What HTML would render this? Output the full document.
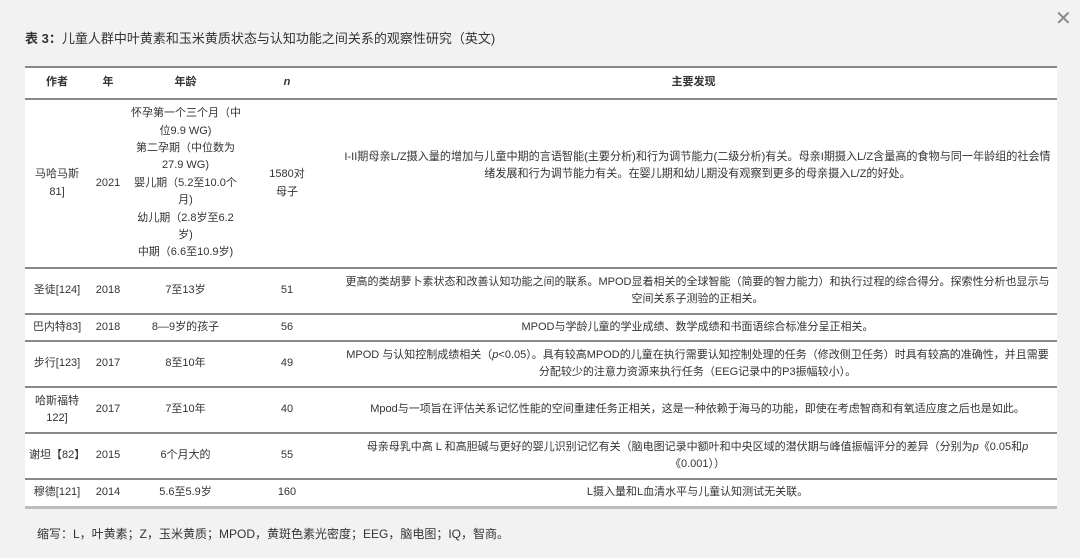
<!DOCTYPE html>
<html><head><meta charset="utf-8"><style>
body{margin:0;width:1080px;height:558px;background:#f2f2f2;font-family:"Liberation Sans","Noto Sans CJK SC",sans-serif;color:#333;position:relative;overflow:hidden}
.title{position:absolute;left:25px;top:28px;font-size:13px;color:#333}
.x{position:absolute;left:1055px;top:6px;font-size:20px;color:#888}
.wrap{position:absolute;left:25px;top:66px;width:1032px;background:#fff;border-top:2px solid #888;border-bottom:3px solid #bbb}
table{border-collapse:collapse;width:100%;font-size:11px;line-height:17.4px;table-layout:fixed}
td,th{text-align:center;vertical-align:middle;padding:0 4px;overflow:hidden}
th{font-weight:bold;height:30px;border-bottom:2px solid #888}
td{border-bottom:2px solid #888}
td.f{padding:0 4px 0 12px}
tr:last-child td{border-bottom:none}
.nw{white-space:nowrap}
.foot{position:absolute;left:37px;top:525px;font-size:12px;color:#333}
</style></head><body>
<div class="title"><b>表 3：</b>儿童人群中叶黄素和玉米黄质状态与认知功能之间关系的观察性研究（英文)</div>
<div class="x">✕</div>
<div class="wrap"><table>
<colgroup><col style="width:64px"><col style="width:38px"><col style="width:117px"><col style="width:86px"><col></colgroup>
<tr><th>作者</th><th>年</th><th>年龄</th><th><i>n</i></th><th>主要发现</th></tr>
<tr><td style="height:167px">马哈马斯<br>81]</td><td>2021</td><td class="nw">怀孕第一个三个月（中<br>位9.9 WG)<br>第二孕期（中位数为<br>27.9 WG)<br>婴儿期（5.2至10.0个<br>月)<br>幼儿期（2.8岁至6.2<br>岁)<br>中期（6.6至10.9岁)</td><td>1580对<br>母子</td><td class="f" style="font-size:11.1px">I-II期母亲L/Z摄入量的增加与儿童中期的言语智能(主要分析)和行为调节能力(二级分析)有关。母亲I期摄入L/Z含量高的食物与同一年龄组的社会情绪发展和行为调节能力有关。在婴儿期和幼儿期没有观察到更多的母亲摄入L/Z的好处。<br><br><br></td></tr>
<tr><td style="height:44px">圣徒[124]</td><td>2018</td><td>7至13岁</td><td>51</td><td class="f">更高的类胡萝卜素状态和改善认知功能之间的联系。MPOD显着相关的全球智能（简要的智力能力）和执行过程的综合得分。探索性分析也显示与空间关系子测验的正相关。</td></tr>
<tr><td style="height:25px">巴内特83]</td><td>2018</td><td>8—9岁的孩子</td><td>56</td><td class="f">MPOD与学龄儿童的学业成绩、数学成绩和书面语综合标准分呈正相关。</td></tr>
<tr><td style="height:44px">步行[123]</td><td>2017</td><td>8至10年</td><td>49</td><td class="f">MPOD 与认知控制成绩相关（<i>p</i>&lt;0.05）。具有较高MPOD的儿童在执行需要认知控制处理的任务（修改侧卫任务）时具有较高的准确性，并且需要分配较少的注意力资源来执行任务（EEG记录中的P3振幅较小）。</td></tr>
<tr><td style="height:44px">哈斯福特<br>122]</td><td>2017</td><td>7至10年</td><td>40</td><td class="f">Mpod与一项旨在评估关系记忆性能的空间重建任务正相关，这是一种依赖于海马的功能，即使在考虑智商和有氧适应度之后也是如此。</td></tr>
<tr><td style="height:44px">谢坦【82】</td><td>2015</td><td>6个月大的</td><td>55</td><td class="f">母亲母乳中高 L 和高胆碱与更好的婴儿识别记忆有关（脑电图记录中额叶和中央区域的潜伏期与峰值振幅评分的差异（分别为<i>p</i>《0.05和<i>p</i><br>《0.001））</td></tr>
<tr><td style="height:26px">穆德[121]</td><td>2014</td><td>5.6至5.9岁</td><td>160</td><td class="f">L摄入量和L血清水平与儿童认知测试无关联。</td></tr>
</table></div>
<div class="foot">缩写：L，叶黄素；Z，玉米黄质；MPOD，黄斑色素光密度；EEG，脑电图；IQ，智商。</div>
</body></html>
